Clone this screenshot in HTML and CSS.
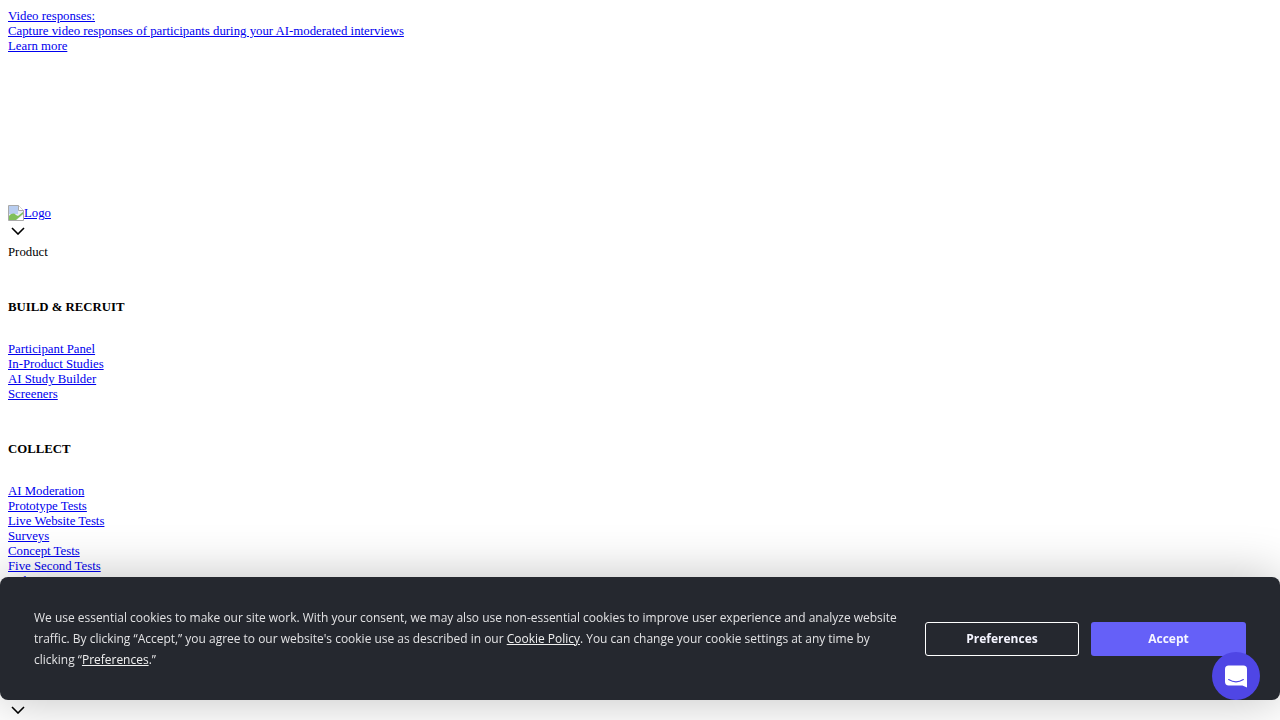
FILE: index.html
```html
<!DOCTYPE html>
<html lang="en">
<head>
<meta charset="utf-8">
<title>Video responses</title>
<link rel="stylesheet" href="styles.css">
</head>
<body>
<a class="promo" href="#">Video responses:<br>Capture video responses of participants during your AI-moderated interviews<br>Learn more</a>
<div class="logo-row">
  <a href="#" class="logo"><svg class="broken" viewBox="0 0 16 16" width="16" height="16"><path d="M.5.5h10l5 5v10H.5z" fill="#e8edf5" stroke="#a9a9a9"/><path d="M1 1h9v8H1z" fill="#b8cdf0"/><path d="M1 15v-4c3-3 5-3 7-1l2 1 5-4v2l-7 6z" fill="#7fbf5a"/><path d="M9 15l6-5v5z" fill="#fff"/><path d="M10.5.5v5h5" fill="#fff" stroke="#a9a9a9"/></svg>Logo</a>
</div>
<svg class="chev" viewBox="0 0 14 8" width="14" height="8"><path d="M1 1l6 6 6-6" fill="none" stroke="#000" stroke-width="1.6"/></svg>
<div class="menu-label">Product</div>
<h4>BUILD &amp; RECRUIT</h4>
<ul>
  <li><a href="#">Participant Panel</a></li>
  <li><a href="#">In-Product Studies</a></li>
  <li><a href="#">AI Study Builder</a></li>
  <li><a href="#">Screeners</a></li>
</ul>
<h4>COLLECT</h4>
<ul>
  <li><a href="#">AI Moderation</a></li>
  <li><a href="#">Prototype Tests</a></li>
  <li><a href="#">Live Website Tests</a></li>
  <li><a href="#">Surveys</a></li>
  <li><a href="#">Concept Tests</a></li>
  <li><a href="#">Five Second Tests</a></li>
  <li><a href="#">Video Screeners</a></li>
</ul>
<svg class="chev chev-bottom" viewBox="0 0 14 8" width="14" height="8"><path d="M1 1l6 6 6-6" fill="none" stroke="#000" stroke-width="1.6"/></svg>

<div class="cookie">
  <p class="cookie-text">We use essential cookies to make our site work. With your consent, we may also use non-essential cookies to improve user experience and analyze website traffic. By clicking “Accept,” you agree to our website's cookie use as described in our <a href="#">Cookie Policy</a>. You can change your cookie settings at any time by clicking “<a href="#">Preferences</a>.”</p>
  <div class="cookie-actions">
    <button class="btn btn-outline">Preferences</button>
    <button class="btn btn-primary">Accept</button>
  </div>
</div>
<div class="launcher">
  <svg viewBox="0 0 24 24" width="22" height="23"><path d="M4 0h16a4 4 0 0 1 4 4v20l-5-2.2H4a4 4 0 0 1-4-4V4a4 4 0 0 1 4-4z" fill="#fff"/><path d="M4 15.3Q12 20.5 20 15.3" fill="none" stroke="#4f46e5" stroke-width="1.3" stroke-linecap="round"/></svg>
</div>
</body>
</html>
```
FILE: styles.css
```css
html, body { height: 720px; overflow: hidden; }
body {
  margin: 0;
  padding: 9px 8px 8px;
  box-sizing: border-box;
  background: #fff;
  color: #000;
  font-family: "Liberation Serif", serif;
  font-size: 12.8px;
  line-height: 15px;
}
a { color: #0000ee; }
.promo { display: block; }
.logo-row { margin-top: 151px; height: 16px; font-size: 12.8px; }
.logo { display: inline-flex; align-items: flex-end; }
.broken { flex: none; }
.chev { display: block; margin: 6px 0 0 3px; }
.menu-label { margin-top: 10px; }
h4 { margin: 40px 0 0; font-size: 12.8px; line-height: 15px; font-weight: 700; }
ul { list-style: none; margin: 27px 0 0; padding: 0; }
.chev-bottom { margin-top: 117px; }

.cookie {
  position: fixed;
  left: 0;
  right: 0;
  bottom: 20px;
  height: 123px;
  box-sizing: border-box;
  padding: 0 34px;
  display: flex;
  align-items: center;
  justify-content: space-between;
  background: #25282f;
  border-radius: 8px;
  box-shadow: 0 0 50px rgba(0,0,0,.25);
  font-family: "Open Sans", sans-serif;
  color: #e2e2e4;
}
.cookie-text { margin: 0; width: 870px; font-size: 11.98px; line-height: 21px; }
.cookie-text a { color: #f0f0f0; }
.cookie-actions { display: flex; gap: 12px; }
.btn {
  width: 154px;
  height: 34px;
  box-sizing: border-box;
  border-radius: 3px;
  font-family: "Open Sans", sans-serif;
  font-size: 12px;
  font-weight: 700;
  color: #f5f5ff;
}
.btn-outline { background: #25282f; border: 1px solid #fff; }
.btn-primary { width: 155px; background: #6560f8; border: 0; }
.launcher {
  position: fixed;
  right: 20px;
  bottom: 20px;
  width: 48px;
  height: 48px;
  border-radius: 50%;
  background: #4f46e5;
  display: flex;
  align-items: center;
  justify-content: center;
}
```
